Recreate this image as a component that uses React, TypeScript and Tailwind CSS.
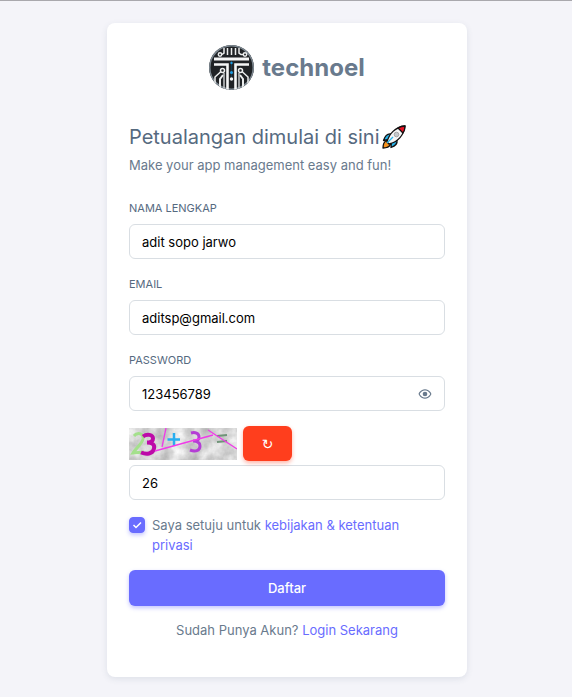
import { useState } from "react";

const inputClass =
  "block h-[35px] w-full rounded-md border border-[#d9dee3] bg-white px-3 text-[13px] text-black outline-none focus:border-[#696cff]";
const labelClass = "mb-2 block text-[11px] leading-4 text-[#566a7f] uppercase";
const linkClass = "text-[#696cff] hover:text-[#5f61e6]";

function Logo() {
  return (
    <svg viewBox="0 0 45 45" className="size-[45px]" aria-hidden="true">
      <defs>
        <clipPath id="logo-disc">
          <circle cx="22.5" cy="22.5" r="22.5" />
        </clipPath>
      </defs>
      <g clipPath="url(#logo-disc)">
        <rect width="45" height="45" fill="#202326" />
        <circle cx="22.5" cy="22.5" r="22" fill="none" stroke="#7d8891" strokeWidth="2" />
        <g fill="none" stroke="#eceeee" strokeWidth="1.5">
          <path d="M18.500 3v7M22.500 3v7M26.500 3v7M15 3v5l-2 1.500M30 3v5l2 1.500h3" />
          <circle cx="11" cy="9.500" r="1.700" />
          <circle cx="36" cy="9.500" r="1.700" />
          <path d="M12 26.500L6 32v8M33 26.500L39 32v8" />
          <circle cx="13.500" cy="25.500" r="2" />
          <circle cx="31.500" cy="25.500" r="2" />
          <path d="M11 45V34l3-4M34 45V34l-3-4" strokeWidth="2" />
        </g>
        <path d="M5 12.500h35v3H5z" fill="#f5f6f6" />
        <path d="M5 19.500h13.500V45M40 19.500H26.500V45" fill="none" stroke="#f5f6f6" strokeWidth="2.600" />
        <path d="M15 28v17M30 28v17" stroke="#c7cbcd" strokeWidth="1.500" />
        <path d="M22.500 16v16" stroke="#123a50" strokeWidth="1" />
        <circle cx="22.500" cy="18" r="1.200" fill="#1c9ae0" />
        <circle cx="22.500" cy="27.500" r="1.500" fill="#1c9ae0" />
        <circle cx="22.500" cy="34" r="1.700" fill="#f5f6f6" />
      </g>
    </svg>
  );
}

function Rocket() {
  return (
    <svg viewBox="0 0 24 24" className="size-6" role="img" aria-label="rocket">
      <g stroke="#111" strokeWidth="1.300" strokeLinejoin="round">
        <path d="M9 9C6 8.500 3 11 1.500 15.500l5.500-1zM15 15c.5 3-1.500 6-6 7.500l.5-6z" fill="#28b5ec" />
        <path d="M4.500 15.500C1.500 17 1 20 1 23c3 0 6-.5 7.500-3.500z" fill="#f7931e" />
        <path d="M5 17C7 9 13 2 23 1c-1 9-7 16-16 18z" fill="#f5f5f5" />
        <path d="M16 3c2-1.300 4.500-2 7-2 0 2.500-.7 5-2 7z" fill="#e81224" />
      </g>
      <circle cx="14.500" cy="9.500" r="2.300" fill="#c5c9cc" stroke="#999" strokeWidth=".8" />
      <path d="M5 18l6-6" stroke="#28b5ec" strokeWidth="1.300" />
    </svg>
  );
}

function Captcha() {
  return (
    <svg viewBox="0 0 108 32" className="h-8 w-[108px]" role="img" aria-label="Captcha: 3 + 3 =">
      <defs>
        <filter id="paper" x="0" y="0" width="100%" height="100%" colorInterpolationFilters="sRGB">
          <feTurbulence type="fractalNoise" baseFrequency="0.07" numOctaves="4" seed="4" />
          <feColorMatrix values="0.400 0 0 0 0.640  0.400 0 0 0 0.640  0.400 0 0 0 0.640  0 0 0 0 1" />
        </filter>
      </defs>
      <rect width="108" height="32" filter="url(#paper)" />
      <g fill="none">
        <path d="M5 8c3-4 10-3 9 3-1 5-7 9-10 14l11-1" stroke="#a4e08c" strokeWidth="3" />
        <path d="M14 8.500c4-3 10-2 10 2 0 3-3 4-6 4 5 0 8 2 7 6-1 6-8 6-13 4" stroke="#bd0aa8" strokeWidth="4" />
        <path d="M45 5v13M38.500 11.500h12.500" stroke="#29aef0" strokeWidth="2.500" />
        <path d="M62 5c4-1 8 0 8 4s-3 4-6 4c4 0 7 1 7 5 0 5-5 6-10 4" stroke="#b43ed5" strokeWidth="3" />
        <path d="M88 8l10-1M88 14l10-1" stroke="#6f9478" strokeWidth="2" />
        <path d="M26 23L84 7M37 0l-4 19M79 2l29 19" stroke="#f03ae8" strokeWidth="1.300" />
      </g>
    </svg>
  );
}

export default function App() {
  const [visible, setVisible] = useState(true);
  return (
    <main className="flex min-h-screen justify-center border-t border-[#a9a8ad] bg-[#f4f4f9] pt-[22px] pb-5 pl-0.5 font-['Inter','Liberation_Sans',sans-serif] text-[13px] leading-5 text-[#697a8d]">
      <section className="w-full max-w-[360px] self-start rounded-lg bg-white px-[22px] pt-[22px] pb-[37px] shadow-[0_2px_6px_rgba(67,89,113,0.12)]">
        <a href="#home" className="flex items-center justify-center gap-2">
          <Logo />
          <span className="text-2xl font-bold text-[#697a8d]">technoel</span>
        </a>

        <h1 className="mt-[33px] flex items-center gap-0.5 text-xl leading-7 text-[#566a7f]">
          Petualangan dimulai di sini <Rocket />
        </h1>
        <p className="mt-1">Make your app management easy and fun!</p>

        <form className="mt-[25px]" onSubmit={(e) => e.preventDefault()}>
          <div className="mb-[17px]">
            <label htmlFor="name" className={labelClass}>Nama Lengkap</label>
            <input id="name" type="text" defaultValue="adit sopo jarwo" className={inputClass} />
          </div>
          <div className="mb-[17px]">
            <label htmlFor="email" className={labelClass}>Email</label>
            <input id="email" type="email" defaultValue="aditsp@gmail.com" className={inputClass} />
          </div>
          <div>
            <label htmlFor="password" className={labelClass}>Password</label>
            <div className="flex h-[35px] items-center rounded-md border border-[#d9dee3] px-3">
              <input
                id="password"
                type={visible ? "text" : "password"}
                defaultValue="123456789"
                className="min-w-0 flex-1 text-[13px] text-black outline-none"
              />
              <button type="button" aria-label="Toggle password" onClick={() => setVisible(!visible)}>
                <svg viewBox="0 0 24 24" className="size-3.5" fill="#697a8d" aria-hidden="true">
                  <circle cx="12" cy="12" r="4" />
                  <path d="M12 4C4 4 1 11.500 1 12s3 8 11 8 11-7.500 11-8-3-8-11-8zm0 14c-5.500 0-8.200-4.300-8.900-6C3.800 10.300 6.500 6 12 6s8.200 4.300 8.900 6c-.7 1.700-3.400 6-8.900 6z" />
                </svg>
              </button>
            </div>
          </div>

          <div className="mt-[15px] mb-1 flex items-center gap-1.5">
            <Captcha />
            <button
              type="button"
              aria-label="Refresh captcha"
              className="flex h-[35px] w-[49px] items-center justify-center rounded-md bg-[#ff3e1d] font-['DejaVu_Sans',sans-serif] text-sm text-white shadow-[0_2px_4px_rgba(255,62,29,0.4)]"
            >
              ↻
            </button>
          </div>
          <input type="text" aria-label="Captcha answer" defaultValue="26" className={inputClass} />

          <div className="mt-[15px] flex items-start gap-[7px]">
            <span className="mt-0.5 grid size-4 shrink-0">
              <input
                id="terms"
                type="checkbox"
                defaultChecked
                className="peer col-start-1 row-start-1 size-4 appearance-none rounded border border-[#d9dee3] bg-white checked:border-[#696cff] checked:bg-[#696cff] checked:shadow-[0_2px_4px_rgba(105,108,255,0.4)]"
              />
              <svg
                viewBox="0 0 16 16"
                className="pointer-events-none col-start-1 row-start-1 hidden size-4 peer-checked:block"
                fill="none"
                stroke="#fff"
                strokeWidth="1.500"
                aria-hidden="true"
              >
                <path d="M4.500 8l2.500 2.500 5-5" />
              </svg>
            </span>
            <label htmlFor="terms" className="pr-5">
              Saya setuju untuk <a href="#privacy" className={linkClass}>kebijakan &amp; ketentuan privasi</a>
            </label>
          </div>

          <button
            type="submit"
            className="mt-[15px] h-9 w-full rounded-md bg-[#696cff] text-[13px] font-medium text-white shadow-[0_2px_4px_rgba(105,108,255,0.4)]"
          >
            Daftar
          </button>
        </form>

        <p className="mt-3.5 text-center">
          Sudah Punya Akun? <a href="#login" className={linkClass}>Login Sekarang</a>
        </p>
      </section>
    </main>
  );
}
